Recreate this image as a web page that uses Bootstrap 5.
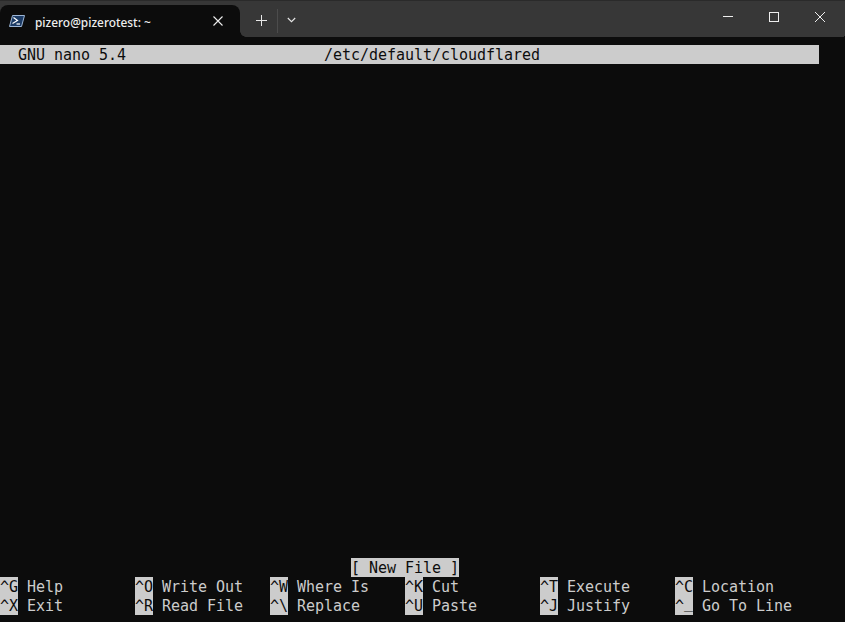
<!DOCTYPE html>
<html lang="en"><head><meta charset="utf-8"><title>nano</title>
<link rel="stylesheet" href="https://cdn.jsdelivr.net/npm/bootstrap@5.3.0/dist/css/bootstrap.min.css">
<style>
html,body{height:100%;margin:0;background:#0c0c0c;overflow:hidden}
.win-shell{height:622px;background:#0c0c0c}
.tab-strip{height:37px;background:#373737;border-top:1px solid #2a2a2a;position:relative}
.tab-strip::after{content:"";position:absolute;right:0;bottom:0;width:3px;height:3px;background:radial-gradient(circle at 0 0,transparent 3px,#0c0c0c 3.5px)}
.term-tab{width:240px;height:32px;margin-top:4px;background:#0c0c0c;border-radius:8px 8px 0 0;padding-left:9px;color:#f2f2f2;position:relative}
.term-tab::after{content:"";position:absolute;left:100%;bottom:0;width:6px;height:6px;background:radial-gradient(circle at 100% 0,transparent 5.5px,#0c0c0c 6px)}
.tab-name{margin-left:10px;width:178px;font:500 11.9px/16px "Noto Sans",sans-serif;color:#eee;margin-top:1px}
.strip-btn{color:#e8e8e8;line-height:0}
.new-btn{width:37px;height:28px;margin-top:5px;padding-left:5px}
.split-line{width:1px;height:24px;background:#4c4c4c;margin-top:8px}
.drop-btn{width:26px;height:28px;margin-top:5px}
.win-btn{width:46px;height:31px}
.win-gap{width:2px}
.term-body{padding-top:8px;font:15px/21px "DejaVu Sans Mono",monospace;letter-spacing:-.03px;color:#ccc;white-space:pre}
.term-line{height:19px}
.title-line{width:819px;background:#ccc;color:#0c0c0c}
.inv-text{display:inline-block;height:19px;vertical-align:top;background:#ccc;color:#0c0c0c}
.under-glyph{display:inline-block;transform:translateY(-3px)}
.status-wrap{padding-left:351px}
.keys-line{display:grid;grid-template-columns:repeat(6,135px)}
.bottom-pad{height:7px}
</style></head>
<body>
<div class="win-shell d-flex flex-column">
  <div class="tab-strip d-flex align-items-start">
    <div class="term-tab d-flex align-items-center">
      <svg width="16" height="12" viewBox="0 0 16 12"><path d="M3.5.5H15.5L12.5 11.5H.5Z" fill="#1d3c66" stroke="#9db6d6" stroke-width="1"/><path d="M4.5 2.5L8.5 5.5L3.5 8.5" fill="none" stroke="#fff" stroke-width="1.2"/><path d="M7.5 9H11" stroke="#fff" stroke-width="1.2"/></svg>
      <span class="tab-name">pizero@pizerotest: ~</span>
      <svg width="10" height="10" viewBox="0 0 10 10"><path d="M.5.5L9.5 9.5M9.5.5L.5 9.5" stroke="#eee" stroke-width="1.1"/></svg>
    </div>
    <div class="strip-btn new-btn d-flex align-items-center justify-content-center"><svg width="11" height="11" viewBox="0 0 11 11"><path d="M5.5 0V11M0 5.5H11" stroke="#e8e8e8" stroke-width="1"/></svg></div>
    <div class="split-line"></div>
    <div class="strip-btn drop-btn d-flex align-items-center justify-content-center"><svg width="9" height="6" viewBox="0 0 9 6"><path d="M.8 1L4.5 4.7L8.2 1" fill="none" stroke="#e8e8e8" stroke-width="1.1"/></svg></div>
    <div class="flex-grow-1"></div>
    <div class="strip-btn win-btn d-flex align-items-center justify-content-center"><svg width="10" height="10" viewBox="0 0 10 10"><path d="M0 4.5H10" stroke="#eee" stroke-width="1"/></svg></div>
    <div class="strip-btn win-btn d-flex align-items-center justify-content-center"><svg width="10" height="10" viewBox="0 0 10 10"><rect x=".5" y=".5" width="9" height="9" fill="none" stroke="#eee" stroke-width="1"/></svg></div>
    <div class="strip-btn win-btn d-flex align-items-center justify-content-center"><svg width="10" height="10" viewBox="0 0 10 10"><path d="M0 0L10 10M10 0L0 10" stroke="#eee" stroke-width="1"/></svg></div>
    <div class="win-gap"></div>
  </div>
  <div class="term-body flex-grow-1 d-flex flex-column">
    <div class="term-line title-line">  GNU nano 5.4                      /etc/default/cloudflared</div>
    <div class="flex-grow-1"></div>
    <div class="term-line status-wrap"><span class="inv-text">[ New File ]</span></div>
    <div class="term-line keys-line">
      <span><span class="inv-text">^G</span> Help</span><span><span class="inv-text">^O</span> Write Out</span><span><span class="inv-text">^W</span> Where Is</span><span><span class="inv-text">^K</span> Cut</span><span><span class="inv-text">^T</span> Execute</span><span><span class="inv-text">^C</span> Location</span>
    </div>
    <div class="term-line keys-line">
      <span><span class="inv-text">^X</span> Exit</span><span><span class="inv-text">^R</span> Read File</span><span><span class="inv-text">^\</span> Replace</span><span><span class="inv-text">^U</span> Paste</span><span><span class="inv-text">^J</span> Justify</span><span><span class="inv-text">^<span class="under-glyph">_</span></span> Go To Line</span>
    </div>
    <div class="bottom-pad"></div>
  </div>
</div>
</body></html>
